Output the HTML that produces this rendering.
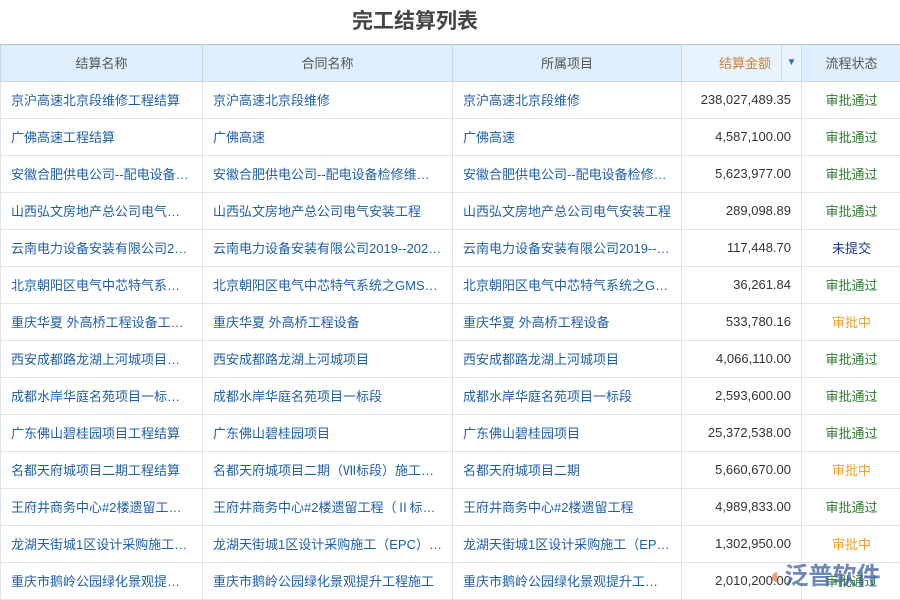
<!DOCTYPE html>
<html><head><meta charset="utf-8"><style>
body{margin:0;width:900px;height:600px;overflow:hidden;background:#fff;font-family:"Liberation Sans","Noto Sans CJK SC",sans-serif;font-size:13px;position:relative}
h1{margin:0;position:absolute;top:5px;left:0;width:830px;text-align:center;font-size:21px;color:#444;font-weight:bold}
table{position:absolute;top:44px;left:0;border-collapse:collapse;table-layout:fixed;width:901px}
td,th{height:37px;border:1px solid #dde3ea;padding:0 10px 2px;white-space:nowrap;overflow:hidden;text-overflow:ellipsis;box-sizing:border-box}
th{background:#deeefb;font-weight:normal;color:#555;border-color:#c5d9ea;border-top:1px solid #a9c6de}
td{color:#1f5fa8}
td.n{text-align:right;color:#333}
td.s{text-align:center;color:#2d7d2d}
td.o{color:#f0a030}td.u{color:#1e3a8a}
th.a{color:#d0803a;text-align:right;background:#e8f3fc}
.logo{position:absolute;left:770px;top:556px;font-size:24px;color:#3b5f9e;font-weight:bold;opacity:.75}
</style></head><body>
<h1>完工结算列表</h1>
<table>
<colgroup><col style="width:202px"><col style="width:250px"><col style="width:229px"><col style="width:100px"><col style="width:20px"><col style="width:100px"></colgroup>
<tr><th>结算名称</th><th>合同名称</th><th>所属项目</th><th class="a">结算金额</th><th style="padding:0 0 2px;color:#2f6eb0;font-size:10px;background:#e8f3fc">▼</th><th>流程状态</th></tr>
<tr><td>京沪高速北京段维修工程结算</td><td>京沪高速北京段维修</td><td>京沪高速北京段维修</td><td class="n" colspan="2">238,027,489.35</td><td class="s">审批通过</td></tr>
<tr><td>广佛高速工程结算</td><td>广佛高速</td><td>广佛高速</td><td class="n" colspan="2">4,587,100.00</td><td class="s">审批通过</td></tr>
<tr><td>安徽合肥供电公司--配电设备检修</td><td>安徽合肥供电公司--配电设备检修维修工程</td><td>安徽合肥供电公司--配电设备检修维修</td><td class="n" colspan="2">5,623,977.00</td><td class="s">审批通过</td></tr>
<tr><td>山西弘文房地产总公司电气安装</td><td>山西弘文房地产总公司电气安装工程</td><td>山西弘文房地产总公司电气安装工程</td><td class="n" colspan="2">289,098.89</td><td class="s">审批通过</td></tr>
<tr><td>云南电力设备安装有限公司2019</td><td>云南电力设备安装有限公司2019--2020年度</td><td>云南电力设备安装有限公司2019--2020</td><td class="n" colspan="2">117,448.70</td><td class="s u">未提交</td></tr>
<tr><td>北京朝阳区电气中芯特气系统之</td><td>北京朝阳区电气中芯特气系统之GMS系统工程</td><td>北京朝阳区电气中芯特气系统之GMS</td><td class="n" colspan="2">36,261.84</td><td class="s">审批通过</td></tr>
<tr><td>重庆华夏 外高桥工程设备工程结算</td><td>重庆华夏 外高桥工程设备</td><td>重庆华夏 外高桥工程设备</td><td class="n" colspan="2">533,780.16</td><td class="s o">审批中</td></tr>
<tr><td>西安成都路龙湖上河城项目结算</td><td>西安成都路龙湖上河城项目</td><td>西安成都路龙湖上河城项目</td><td class="n" colspan="2">4,066,110.00</td><td class="s">审批通过</td></tr>
<tr><td>成都水岸华庭名苑项目一标段结算</td><td>成都水岸华庭名苑项目一标段</td><td>成都水岸华庭名苑项目一标段</td><td class="n" colspan="2">2,593,600.00</td><td class="s">审批通过</td></tr>
<tr><td>广东佛山碧桂园项目工程结算</td><td>广东佛山碧桂园项目</td><td>广东佛山碧桂园项目</td><td class="n" colspan="2">25,372,538.00</td><td class="s">审批通过</td></tr>
<tr><td>名都天府城项目二期工程结算</td><td>名都天府城项目二期（Ⅶ标段）施工工程</td><td>名都天府城项目二期</td><td class="n" colspan="2">5,660,670.00</td><td class="s o">审批中</td></tr>
<tr><td>王府井商务中心#2楼遗留工程结算</td><td>王府井商务中心#2楼遗留工程（Ⅱ标段）</td><td>王府井商务中心#2楼遗留工程</td><td class="n" colspan="2">4,989,833.00</td><td class="s">审批通过</td></tr>
<tr><td>龙湖天街城1区设计采购施工结算</td><td>龙湖天街城1区设计采购施工（EPC）总承包</td><td>龙湖天街城1区设计采购施工（EPC）</td><td class="n" colspan="2">1,302,950.00</td><td class="s o">审批中</td></tr>
<tr><td>重庆市鹅岭公园绿化景观提升工程</td><td>重庆市鹅岭公园绿化景观提升工程施工</td><td>重庆市鹅岭公园绿化景观提升工程施工</td><td class="n" colspan="2">2,010,200.00</td><td class="s">审批通过</td></tr>
</table>
<div class="logo"><span style="color:#e0805a">◐</span>泛普软件</div>
</body></html>
